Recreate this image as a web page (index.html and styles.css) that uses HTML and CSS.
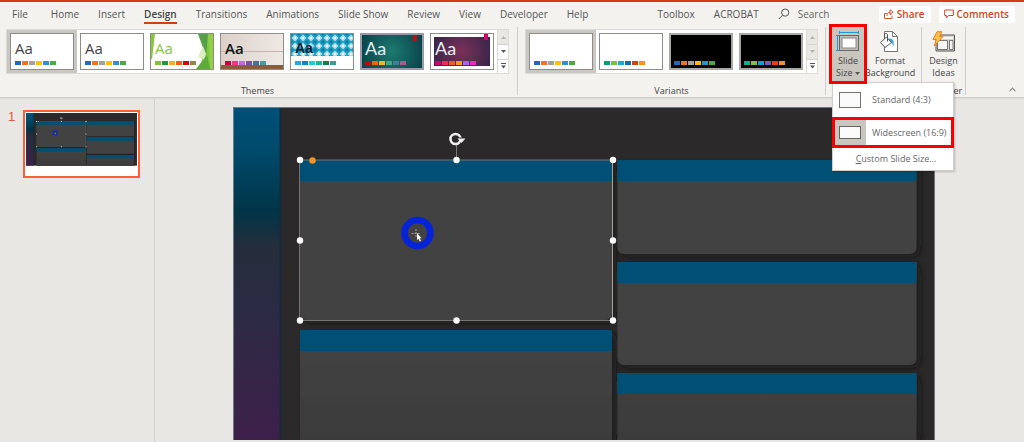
FILE: index.html
```
<!DOCTYPE html>
<html lang="en">
<head>
<meta charset="utf-8">
<meta name="viewport" content="width=device-width, initial-scale=1">
<title>Presentation - Design</title>
<link rel="stylesheet" href="styles.css">
</head>
<body>
<header class="app-header">
  <nav class="tabs" aria-label="Ribbon tabs">
    <a class="tab tab-file" href="#file">File</a>
    <a class="tab" href="#home">Home</a>
    <a class="tab" href="#insert">Insert</a>
    <a class="tab tab-active" href="#design">Design</a>
    <a class="tab" href="#transitions">Transitions</a>
    <a class="tab" href="#animations">Animations</a>
    <a class="tab" href="#slideshow">Slide Show</a>
    <a class="tab" href="#review">Review</a>
    <a class="tab" href="#view">View</a>
    <a class="tab" href="#developer">Developer</a>
    <a class="tab" href="#help">Help</a>
    <a class="tab tab-addin" href="#toolbox">Toolbox</a>
    <a class="tab" href="#acrobat">ACROBAT</a>
    <label class="search">
      <svg width="12" height="12" viewBox="0 0 12 12" fill="none" stroke="#555" aria-hidden="true"><circle cx="7.2" cy="4.6" r="3.6"/><path d="M4.6 7.2 0.8 11"/></svg>
      <input class="search-input" type="text" placeholder="Search" aria-label="Search">
    </label>
  </nav>
  <div class="actions">
    <button class="action" type="button">
      <svg width="10" height="10" viewBox="0 0 10 10" fill="none" stroke="#d04727" aria-hidden="true"><path d="M3 4.500H.5v5h7.500V6.500M3 7c0-2.500 1-3.800 3.500-3.800M6 .8v5L9.300 3.200z" stroke-width=".9"/></svg>
      Share
    </button>
    <button class="action" type="button">
      <svg width="10" height="10" viewBox="0 0 10 10" fill="none" stroke="#d04727" aria-hidden="true"><path d="M.7 1h8.6v5.5H4.5L2.3 9V6.5H.7z"/></svg>
      Comments
    </button>
  </div>
</header>

<section class="ribbon" aria-label="Design">
  <div class="group group-themes">
    <div class="gallery">
      <button class="cell cell-selected" type="button" aria-label="Current theme"><span class="thumb"><span class="sample">Aa</span><span class="swatches office"><i></i><i></i><i></i><i></i><i></i><i></i></span></span></button>
      <button class="cell" type="button" aria-label="Office theme"><span class="thumb"><span class="sample">Aa</span><span class="swatches office"><i></i><i></i><i></i><i></i><i></i><i></i></span></span></button>
      <button class="cell" type="button" aria-label="Facet theme"><span class="thumb facet">
        <svg class="art" viewBox="0 0 62 35" preserveAspectRatio="none" aria-hidden="true"><path d="M0 0h4L1 25H0z" fill="#86c73a"/><path d="M53 0h9v35H50z" fill="#7fc241"/><path d="M47 0h10l-2 22z" fill="#55a14a"/><path d="M57 0h5v35h-3z" fill="#8fd044"/><path d="M52 12l3 8-2 6-6-3z" fill="#d8eec0"/><path d="M45 35l11-14 3 14z" fill="#5cab3f"/></svg>
        <span class="sample">Aa</span><span class="swatches facet-set"><i></i><i></i><i></i><i></i><i></i><i></i></span></span></button>
      <button class="cell" type="button" aria-label="Gallery theme"><span class="thumb wood"><span class="sample">Aa</span><span class="swatches wood-set"><i></i><i></i><i></i><i></i><i></i><i></i></span></span></button>
      <button class="cell" type="button" aria-label="Integral theme"><span class="thumb integral">
        <svg class="art" viewBox="0 0 62 35" preserveAspectRatio="none" aria-hidden="true"><defs><pattern id="check" width="8" height="8" patternUnits="userSpaceOnUse"><rect width="8" height="8" fill="#1a9cc0"/><path d="M4 .5 7.500 4 4 7.500.5 4z" fill="#a9dcea"/><circle cx="4" cy="4" r="1.200" fill="#e8f6fa"/><path d="M0 0h2L0 2zM8 8H6l2-2zM8 0v2L6 0zM0 8V6l2 2z" fill="#0e7ea6"/></pattern></defs><rect width="62" height="22" fill="url(#check)"/></svg>
        <span class="sample">Aa</span><span class="swatches integral-set"><i></i><i></i><i></i><i></i><i></i><i></i></span></span></button>
      <button class="cell" type="button" aria-label="Ion theme"><span class="thumb ion"><span class="sample">Aa</span><span class="swatches ion-set"><i></i><i></i><i></i><i></i><i></i><i></i></span></span></button>
      <button class="cell" type="button" aria-label="Ion Boardroom theme"><span class="thumb ion boardroom"><span class="sample">Aa</span><span class="swatches boardroom-set"><i></i><i></i><i></i><i></i><i></i><i></i></span></span></button>
      <div class="scroller">
        <button class="scroll disabled" type="button" aria-label="Scroll themes up"><svg width="5" height="3" viewBox="0 0 5 3"><path d="M0 3 2.5 0 5 3z" fill="currentColor"/></svg></button>
        <button class="scroll" type="button" aria-label="Scroll themes down"><svg width="5" height="3" viewBox="0 0 5 3"><path d="M0 0h5L2.5 3z" fill="currentColor"/></svg></button>
        <button class="scroll" type="button" aria-label="More themes"><svg width="5" height="6" viewBox="0 0 5 6"><path d="M0 .5h5" stroke="currentColor"/><path d="M0 2.6h5L2.5 5.6z" fill="currentColor"/></svg></button>
      </div>
    </div>
    <div class="group-label">Themes</div>
  </div>

  <div class="group group-variants">
    <div class="gallery">
      <button class="cell cell-selected" type="button" aria-label="Variant 1"><span class="thumb"><span class="swatches office"><i></i><i></i><i></i><i></i><i></i><i></i></span></span></button>
      <button class="cell" type="button" aria-label="Variant 2"><span class="thumb"><span class="swatches green-set"><i></i><i></i><i></i><i></i><i></i><i></i></span></span></button>
      <button class="cell" type="button" aria-label="Variant 3"><span class="thumb black"><span class="swatches office"><i></i><i></i><i></i><i></i><i></i><i></i></span></span></button>
      <button class="cell" type="button" aria-label="Variant 4"><span class="thumb black"><span class="swatches bright-set"><i></i><i></i><i></i><i></i><i></i><i></i></span></span></button>
      <div class="scroller">
        <button class="scroll disabled" type="button" aria-label="Scroll variants up"><svg width="5" height="3" viewBox="0 0 5 3"><path d="M0 3 2.5 0 5 3z" fill="currentColor"/></svg></button>
        <button class="scroll disabled" type="button" aria-label="Scroll variants down"><svg width="5" height="3" viewBox="0 0 5 3"><path d="M0 0h5L2.5 3z" fill="currentColor"/></svg></button>
        <button class="scroll" type="button" aria-label="More variants"><svg width="5" height="6" viewBox="0 0 5 6"><path d="M0 .5h5" stroke="currentColor"/><path d="M0 2.6h5L2.5 5.6z" fill="currentColor"/></svg></button>
      </div>
    </div>
    <div class="group-label">Variants</div>
  </div>

  <div class="group group-customize">
    <div class="tools">
      <div class="dropdown">
        <button class="tool tool-open" type="button" aria-expanded="true">
          <svg width="24" height="22" viewBox="0 0 24 22" fill="none" aria-hidden="true"><path d="M3 1.5h20M3.500 0v3M22.500 0v3M1.500 4v16M0 4.500h3M0 19.500h3" stroke="#1f9ad6"/><rect x="3.500" y="4.500" width="19" height="15" fill="#c0bdb6" stroke="#666"/><rect x="6" y="7" width="14" height="10" fill="#fff" stroke="#888"/></svg>
          <span>Slide<br>Size <svg class="caret" width="5" height="3" viewBox="0 0 5 3"><path d="M0 0h5L2.500 3z" fill="#555"/></svg></span>
        </button>
        <div class="menu">
          <button class="menu-item" type="button"><span class="menu-icon"><svg width="22" height="16" viewBox="0 0 22 16"><rect x=".5" y=".5" width="21" height="15" fill="#fafafa" stroke="#77746f"/></svg></span><span class="menu-text">Standard (4:3)</span></button>
          <button class="menu-item menu-item-selected" type="button"><span class="menu-icon"><svg width="22" height="13" viewBox="0 0 22 13"><rect x=".5" y=".5" width="21" height="12" fill="#fafafa" stroke="#66635e"/></svg></span><span class="menu-text">Widescreen (16:9)</span></button>
          <button class="menu-custom" type="button"><u>C</u>ustom Slide Size...</button>
        </div>
      </div>
      <button class="tool" type="button">
        <svg width="22" height="22" viewBox="0 0 22 22" fill="none" aria-hidden="true"><path d="M5.500 .5h8l5 5v15h-13z" fill="#fff" stroke="#777"/><path d="M13.500 .5v5h5" stroke="#777"/><path d="M10 7.500c4-.5 5.500 2.500 4.500 8-1-3-2.500-4.500-4.500-5z" fill="#35a8e0"/><path d="M1.500 11.500 7.500 6l5 5.500-6.500 5z" fill="#fff" stroke="#555"/><path d="M8.500 10.500V4c0-2-3-2-3 0v4" stroke="#555"/></svg>
        <span>Format<br>Background</span>
      </button>
    </div>
  </div>

  <div class="group group-designer">
    <div class="tools">
      <button class="tool" type="button">
        <svg width="24" height="22" viewBox="0 0 24 22" fill="none" aria-hidden="true"><path d="M4 4h18.500v16H4z" fill="#d8d6d2" stroke="#555"/><path d="M5.500 9.500h10v9h-10zM17.500 9.500h3.500v9h-3.500z" fill="#f6f5f3" stroke="#777"/><path d="M9 7h12" stroke="#f6f5f3" stroke-width="2"/><path d="M5 .8h5L7.500 5.500H11L2.200 15l2-6.500H1z" fill="#ffc04a" stroke="#f08019"/></svg>
        <span>Design<br>Ideas</span>
      </button>
    </div>
    <div class="group-label">Designer</div>
  </div>
  <button class="collapse" type="button" aria-label="Collapse the ribbon"><svg width="7" height="5" viewBox="0 0 7 5" fill="none" stroke="#444"><path d="M.6 4 3.500 1.200 6.400 4"/></svg></button>
</section>

<main class="workspace">
  <aside class="slides" aria-label="Slides">
    <span class="slide-number">1</span>
    <button class="slide-thumb" type="button" aria-label="Slide 1"><svg class="slide-art" viewBox="0 0 702 333" aria-hidden="true"><use href="#slide"/></svg></button>
  </aside>
  <section class="editor" aria-label="Slide editor">
    <svg class="slide-art" viewBox="0 0 702 333" role="img" aria-label="Slide with five panels">
      <defs>
        <linearGradient id="bar" x1="0" y1="0" x2="0" y2="1"><stop offset="0" stop-color="#005079"/><stop offset=".12" stop-color="#004b6d"/><stop offset=".31" stop-color="#003548"/><stop offset=".42" stop-color="#252d3b"/><stop offset=".6" stop-color="#2b2b43"/><stop offset="1" stop-color="#3e204a"/></linearGradient>
        <linearGradient id="panel" gradientUnits="userSpaceOnUse" x1="0" y1="0" x2="0" y2="333"><stop offset="0" stop-color="#434343"/><stop offset=".75" stop-color="#424242"/><stop offset="1" stop-color="#3b3b3b"/></linearGradient>
        <filter id="shade" x="-10%" y="-10%" width="120%" height="120%"><feDropShadow dx="4" dy="3" stdDeviation="3" flood-color="#151515" flood-opacity=".6"/></filter>
      </defs>
      <g id="slide">
        <rect width="702" height="333" fill="#2b2929"/>
        <rect width="48" height="333" fill="url(#bar)"/>
        <path d="M47.500 0v333" stroke="#17293c" stroke-width="2"/>
        <g filter="url(#shade)" fill="url(#panel)">
          <path d="M67 53h312v153q0 7-7 7H74q-7 0-7-7z"/>
          <path d="M67 223h312v110H67z"/>
          <path d="M384.500 53h299v87q0 7-7 7h-285q-7 0-7-7z"/>
          <path d="M384.500 155h299v96q0 7-7 7h-285q-7 0-7-7z"/>
          <path d="M384.500 266h299v67h-299z"/>
        </g>
        <path d="M67 53h312v21H67zM67 223h312v21H67zM384.500 53h299v21h-299zM384.500 155h299v21h-299zM384.500 266h299v21h-299z" fill="#005076"/>
        <rect x="66.500" y="53" width="313" height="160.500" fill="none" stroke="#77736f"/>
        <path d="M379.500 53v160.500" stroke="#aaa49d"/>
        <path d="M223.500 38v12" stroke="#777"/>
        <circle cx="222.500" cy="32" r="5" fill="none" stroke="#eee" stroke-width="2.600"/>
        <path d="M224.500 30.500h4.500v3z" fill="#2b2929"/>
        <path d="M224.500 31.500h8l-4 4.500z" fill="#eee"/>
        <g fill="#fff"><circle cx="67" cy="53" r="3.200"/><circle cx="223.500" cy="53" r="3.200"/><circle cx="380" cy="53" r="3.200"/><circle cx="67" cy="133.500" r="3.200"/><circle cx="380" cy="133.500" r="3.200"/><circle cx="67" cy="213.500" r="3.200"/><circle cx="223.500" cy="213.500" r="3.200"/><circle cx="380" cy="213.500" r="3.200"/></g>
        <circle cx="79.500" cy="53.500" r="3.200" fill="#f7941e"/>
        <circle cx="184.500" cy="126" r="13" fill="none" stroke="#0524da" stroke-width="6.500"/>
        <path d="M183 122v9M178.500 126.500h9" stroke="#a59b98" stroke-dasharray="2 1"/>
        <path d="M184 126v7l1.500-1.300 1.300 2.800 1.200-.6-1.200-2.600h1.800z" fill="#fff"/>
        <path d="M.5 333V.5h701V333" fill="none" stroke="#8e9aa2" stroke-opacity=".7"/>
      </g>
    </svg>
  </section>
</main>
</body>
</html>
```
FILE: styles.css
```
* { box-sizing: border-box; }
body {
  margin: 0;
  min-height: 100vh;
  display: flex;
  flex-direction: column;
  background: #e8e7e3;
  color: #444;
  font: 10px/12px "Open Sans", "Noto Sans", sans-serif;
}
button {
  margin: 0;
  padding: 0;
  border: 0;
  background: none;
  color: inherit;
  font: inherit;
}
svg { flex: none; }

.app-header {
  display: flex;
  justify-content: space-between;
  align-items: center;
  height: 26px;
  padding: 0 9px 0 12px;
  border-top: 2px solid #d13e14;
  background: #f3f2ef;
}
.tabs { display: flex; align-items: center; gap: 19px; }
.tab {
  padding: 4px 0 2px;
  border-bottom: 2px solid transparent;
  color: #555;
  text-decoration: none;
  white-space: nowrap;
}
.tab-file { margin-right: 4px; }
.tab-active { border-color: #d13e14; color: #444; font-weight: 600; }
.tab-addin { margin-left: 50px; }
.search { display: flex; align-items: center; gap: 8px; }
.search-input {
  width: 56px;
  padding: 0;
  border: 0;
  background: none;
  font: inherit;
  color: #555;
}
.search-input::placeholder { color: #666; opacity: 1; }
.actions { display: flex; gap: 8px; }
.action {
  display: flex;
  align-items: center;
  gap: 3px;
  height: 17px;
  padding: 0 6px 0 5px;
  border-radius: 2px;
  background: #fff;
  color: #d04727;
  font-weight: 600;
}

.ribbon {
  display: flex;
  height: 72px;
  padding-top: 1px;
  border-bottom: 1px solid #cfcdc9;
  box-shadow: 0 1px 1px #dddbd7;
  background: #f3f2ef;
}
.group {
  display: flex;
  flex-direction: column;
  justify-content: space-between;
  height: 68px;
  border-right: 1px solid #cfcdc9;
}
.group-themes { padding: 2px 8px 0 6px; }
.group-variants { padding: 2px 7px 0; }
.group-customize { width: 96px; }
.group-designer { width: 44px; }
.group-label { text-align: center; font-size: 9px; line-height: 8px; }

.gallery {
  display: flex;
  width: max-content;
  height: 45px;
  border: 1px solid #dddbd7;
  background: #fff;
}
.cell { width: 70px; padding: 3px; background: #fff; }
.cell-selected { background: #c9c7c1; }
.thumb {
  position: relative;
  display: flex;
  flex-direction: column;
  justify-content: flex-end;
  gap: 5px;
  height: 37px;
  padding: 0 0 4px 4px;
  border: 1px solid #8f8d87;
  background: #fff;
}
.art { position: absolute; inset: 0; width: 100%; height: 100%; }
.sample {
  position: relative;
  color: #444;
  font-size: 15px;
  line-height: 16px;
  text-align: left;
}
.swatches { position: relative; display: flex; gap: 1px; }
.swatches i { width: 6px; height: 4px; }
.facet .sample { color: #86c73a; }
.wood { background: linear-gradient(#0000 31px, #8c5c3a 31px), linear-gradient(#0000 17px, #e6a3ae 17px, #e6a3ae 18px, #0000 18px), linear-gradient(90deg, #dcd1ca, #eee8e4); }
.wood .sample { color: #111; font-weight: 600; }
.integral .sample { color: #123; font-weight: 600; font-size: 14px; font-family: "Liberation Sans", sans-serif; }
.ion { padding: 0 0 3px 3px; border: 2px solid #99a; background: radial-gradient(circle, #1d7a70, #0a4149); }
.ion .sample { color: #e6eeee; font-family: Lato, sans-serif; font-size: 18px; }
.ion::after {
  content: "";
  position: absolute;
  top: 0;
  right: 5px;
  width: 4px;
  height: 6px;
  background: #c00d12;
}
.boardroom { padding: 0 0 4px 4px; border: 1px solid #8f8d87; box-shadow: inset 0 0 0 3px #fff; background: radial-gradient(circle, #7b3159, #2d2347); }
.boardroom::after { background: #d5006c; }
.black { border: 2px solid #aaa8a2; background: #000; padding: 0 0 3px 3px; }

i:nth-child(1) { background: #2068c0; }
i:nth-child(2) { background: #f8701c; }
i:nth-child(3) { background: #a3a19c; }
i:nth-child(4) { background: #ffc000; }
i:nth-child(5) { background: #2f92d0; }
i:nth-child(6) { background: #4caa45; }
.facet-set i:nth-child(1) { background: #7cc33a; }
.facet-set i:nth-child(2) { background: #1f9b35; }
.facet-set i:nth-child(3) { background: #f3b11d; }
.facet-set i:nth-child(4) { background: #fa5c0b; }
.facet-set i:nth-child(5) { background: #d40707; }
.facet-set i:nth-child(6) { background: #94844a; }
.wood-set i:nth-child(1) { background: #c4043c; }
.wood-set i:nth-child(2) { background: #fa3282; }
.wood-set i:nth-child(3) { background: #c763f2; }
.wood-set i:nth-child(4) { background: #7b50a8; }
.wood-set i:nth-child(5) { background: #4b6ba4; }
.wood-set i:nth-child(6) { background: #4b9a9e; }
.integral-set i:nth-child(1) { background: #15ade4; }
.integral-set i:nth-child(2) { background: #1583c6; }
.integral-set i:nth-child(3) { background: #14d0d8; }
.integral-set i:nth-child(4) { background: #12bd93; }
.integral-set i:nth-child(5) { background: #128044; }
.integral-set i:nth-child(6) { background: #3a9f92; }
.ion-set i:nth-child(1) { background: #c70507; }
.ion-set i:nth-child(2) { background: #f2640b; }
.ion-set i:nth-child(3) { background: #f4b324; }
.ion-set i:nth-child(4) { background: #43a885; }
.ion-set i:nth-child(5) { background: #457d95; }
.ion-set i:nth-child(6) { background: #ae5a8e; }
.boardroom-set i:nth-child(1) { background: #d1006c; }
.boardroom-set i:nth-child(2) { background: #ef2c54; }
.boardroom-set i:nth-child(3) { background: #f9562a; }
.boardroom-set i:nth-child(4) { background: #fb922a; }
.boardroom-set i:nth-child(5) { background: #a662f2; }
.boardroom-set i:nth-child(6) { background: #ee27c5; }
.green-set i:nth-child(1) { background: #0a9c75; }
.green-set i:nth-child(2) { background: #78c143; }
.green-set i:nth-child(3) { background: #16aecb; }
.green-set i:nth-child(4) { background: #0d70a8; }
.green-set i:nth-child(5) { background: #d24310; }
.green-set i:nth-child(6) { background: #fa930d; }
.bright-set i:nth-child(1) { background: #0eb08a; }
.bright-set i:nth-child(2) { background: #83bd4b; }
.bright-set i:nth-child(3) { background: #109fce; }
.bright-set i:nth-child(4) { background: #7d58c2; }
.bright-set i:nth-child(5) { background: #e73d1c; }
.bright-set i:nth-child(6) { background: #f2902a; }

.scroller {
  display: grid;
  grid-template-rows: repeat(3, 1fr);
  width: 11px;
  border-left: 1px solid #dddbd7;
}
.scroll { display: grid; place-items: center; color: #555; }
.scroll + .scroll { border-top: 1px solid #d4d2cd; }
.disabled { background: #e8e7e4; color: #b5b3ae; }

.tools { display: flex; justify-content: center; }
.group-customize .tools { justify-content: flex-start; padding-left: 5px; }
.dropdown { position: relative; }
.tool {
  display: flex;
  flex-direction: column;
  align-items: center;
  gap: 2px;
  height: 55px;
  padding-top: 4px;
  font-size: 9px;
}
.tool-open { width: 34px; background: #c9c6c0; }
.caret { vertical-align: middle; }
.dropdown::after,
.menu-item-selected::after {
  content: "";
  position: absolute;
  inset: -3px -2px -2px;
  border: 3px solid #f90000;
  pointer-events: none;
  z-index: 3;
}
.menu {
  position: absolute;
  top: 55px;
  left: 1px;
  z-index: 2;
  width: 122px;
  border: 1px solid #d0ceca;
  background: #fff;
  box-shadow: 1px 1px 2px #0003;
  color: #666;
  font-size: 9px;
}
.menu-item { position: relative; display: flex; align-items: center; width: 100%; height: 34px; }
.menu-icon { display: grid; place-items: center; width: 33px; height: 100%; }
.menu-text { padding-left: 6px; white-space: nowrap; }
.menu-item-selected { height: 31px; }
.menu-item-selected .menu-icon { background: #c9c6c0; }
.menu-item-selected::after { inset: 0 -1px 0 -1px; }
.menu-custom { width: 100%; height: 22px; padding-left: 6px; }
.collapse { align-self: flex-end; margin: 0 8px 3px auto; }

.workspace { display: flex; flex: 1; }
.slides {
  display: flex;
  align-items: flex-start;
  gap: 9px;
  width: 155px;
  padding: 12px 14px 0 8px;
  border-right: 1px solid #d3d1cd;
}
.slide-number { width: 6px; color: #e0573c; font: 13px/14px "Liberation Sans", sans-serif; }
.slide-thumb {
  flex: 1;
  padding: 1px 1px 10px;
  border: 2px solid #fc6038;
  background: #fff;
}
.slide-art { display: block; width: 100%; height: auto; }
.editor { flex: 1; padding: 9px 89px 0 78px; }
```
